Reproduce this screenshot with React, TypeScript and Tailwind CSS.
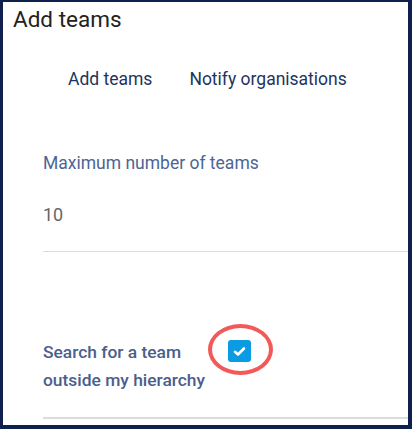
import React from 'react';

const TABS = ['Add teams', 'Notify organisations'];

export default function App() {
  return (
    <div
      className="w-[412px] h-[429px] bg-white border-[#0f1f4e] border-t-[2px] border-l-[3px] border-r-[4px] border-b-[4px] overflow-hidden"
      style={{ fontFamily: 'Roboto, "Liberation Sans", sans-serif' }}
    >
      {/* Header */}
      <h1 className="pl-[10px] pt-[2px] text-[22.5px] leading-[30px] text-[#222222] font-normal">
        Add teams
      </h1>

      {/* Tabs */}
      <div className="flex mt-[33px] pl-[65px] gap-[37px]">
        {TABS.map((tab) => (
          <span key={tab} className="text-[17.5px] leading-[24px] text-[#1d3461]">
            {tab}
          </span>
        ))}
      </div>

      {/* Max teams field */}
      <div className="pl-[40px] mt-[60px]">
        <label className="block text-[17.5px] leading-[24px] text-[#4d6594]">
          Maximum number of teams
        </label>
        <div className="mt-[28px] text-[18px] leading-[24px] text-[#666666]">10</div>
        <div className="mt-[24px] h-px bg-[#d6dee6]" />
      </div>

      {/* Checkbox row */}
      <div className="pl-[40px] mt-[86px]">
        <div className="flex items-start">
          <span className="w-[185px] text-[17.4px] leading-[28px] font-medium text-[#4a5e8c]">
            Search for a team outside my hierarchy
          </span>
          <div className="relative mt-[2px]">
            <div className="w-[23px] h-[22px] rounded-[3px] bg-[#0a9be3] flex items-center justify-center">
              <svg width="13" height="11" viewBox="0 0 13 11" fill="none">
                <path d="M2 5.8 L5 8.5 L11 2.5" stroke="white" strokeWidth="2.6" strokeLinecap="round" strokeLinejoin="round" />
              </svg>
            </div>
            {/* highlight ring */}
            <div className="absolute left-[-20px] top-[-16px] w-[65px] h-[51px] rounded-[50%] border-[4px] border-[#f25a5a]" />
          </div>
        </div>
        <div className="mt-[23px] h-[2px] bg-[#dcdcdc]" />
      </div>
    </div>
  );
}
